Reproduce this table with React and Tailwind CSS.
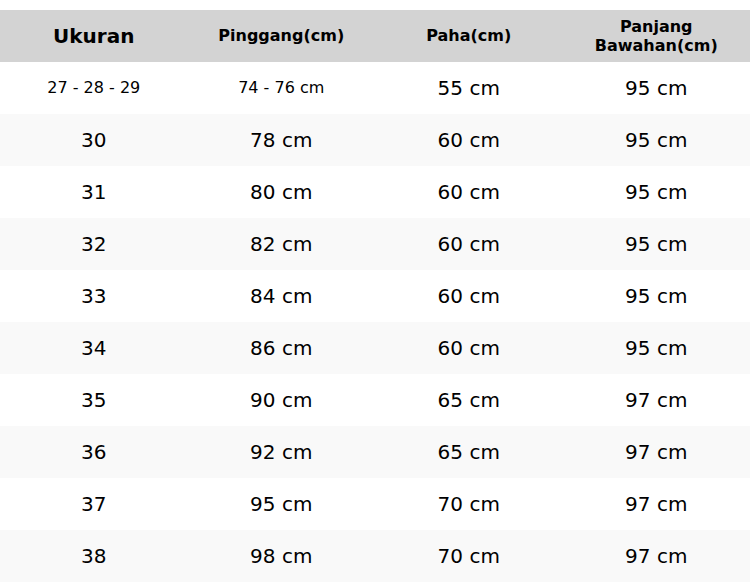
import React from 'react';

const rows = [
  ['27 - 28 - 29', '74 - 76 cm', '55 cm', '95 cm'],
  ['30', '78 cm', '60 cm', '95 cm'],
  ['31', '80 cm', '60 cm', '95 cm'],
  ['32', '82 cm', '60 cm', '95 cm'],
  ['33', '84 cm', '60 cm', '95 cm'],
  ['34', '86 cm', '60 cm', '95 cm'],
  ['35', '90 cm', '65 cm', '97 cm'],
  ['36', '92 cm', '65 cm', '97 cm'],
  ['37', '95 cm', '70 cm', '97 cm'],
  ['38', '98 cm', '70 cm', '97 cm'],
];

const App = () => {
  return (
    <div className="w-[750px] bg-white pt-[10px] text-black" style={{ fontFamily: '"DejaVu Sans", sans-serif' }}>
      {/* Header */}
      <div className="grid grid-cols-4 h-[52px] bg-[#d3d3d3] font-bold">
        <div className="flex items-center justify-center text-[20px]">Ukuran</div>
        <div className="flex items-center justify-center text-[16px]">Pinggang(cm)</div>
        <div className="flex items-center justify-center text-[16px]">Paha(cm)</div>
        <div className="flex items-center justify-center text-center text-[16px] leading-[19px]">
          Panjang<br />Bawahan(cm)
        </div>
      </div>

      {/* Body rows */}
      {rows.map((r, i) => (
        <div key={i} className={`grid grid-cols-4 h-[52px] ${i % 2 === 1 ? 'bg-[#f9f9f9]' : 'bg-white'}`}>
          {r.map((cell, j) => (
            <div
              key={j}
              className={`flex items-center justify-center ${i === 0 && j < 2 ? 'text-[16px]' : 'text-[20px]'}`}
            >
              {cell}
            </div>
          ))}
        </div>
      ))}
    </div>
  );
};

export default App;
